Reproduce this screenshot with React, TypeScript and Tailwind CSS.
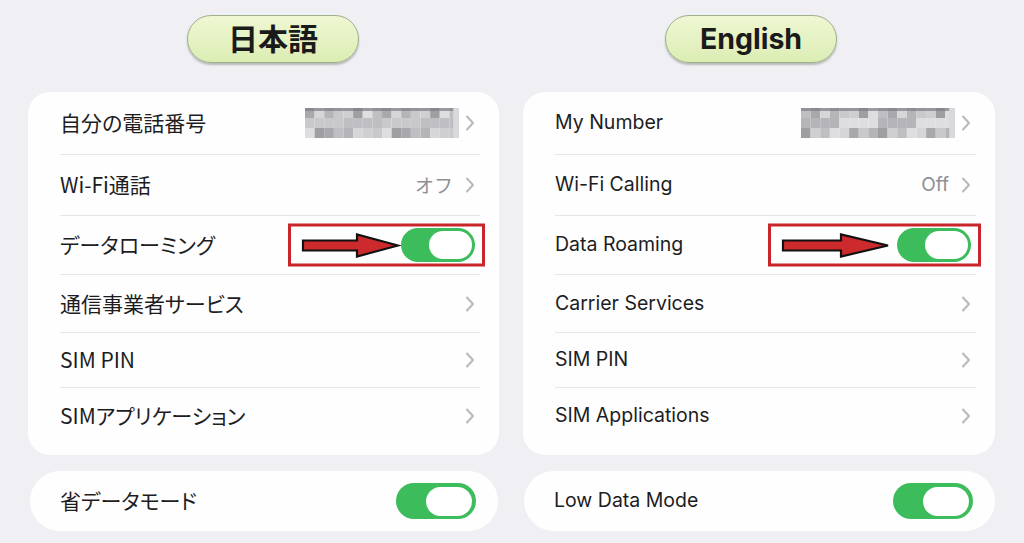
import React from "react";

const FONT = 'Inter, "Noto Sans CJK JP", "Noto Sans", sans-serif';
const JP = '"Noto Sans CJK JP", Inter, sans-serif';

function Chevron() {
  return (
    <svg width="10" height="16" viewBox="0 0 10 16" className="shrink-0">
      <path d="M2 1.5 L8 8 L2 14.5" fill="none" stroke="#b9b9be" strokeWidth="2" strokeLinecap="round" strokeLinejoin="round" />
    </svg>
  );
}

function Toggle({ big = false }: { big?: boolean }) {
  return big ? (
    <div className="w-[80px] h-[36px] rounded-full bg-[#3cbc5b] flex items-center justify-end pr-[4px] shrink-0">
      <div className="w-[46px] h-[29px] rounded-full bg-white" />
    </div>
  ) : (
    <div className="w-[74px] h-[34px] rounded-full bg-[#3cbc5b] flex items-center justify-end pr-[3px] shrink-0">
      <div className="w-[43px] h-[28px] rounded-full bg-white" />
    </div>
  );
}

function Pixelated({ seed }: { seed: number }) {
  const cols = 16;
  const rows = 3;
  const shades = ["#c9c9cc", "#b5b5b9", "#d6d6d9", "#a9a9ad", "#bfbfc3", "#dedee0", "#9e9ea3", "#cfcfd2"];
  const rects = [];
  for (let r = 0; r < rows; r++) {
    for (let c = 0; c < cols; c++) {
      const i = (c * 7 + r * 5 + seed * 3 + ((c * r) % 4)) % shades.length;
      rects.push(<rect key={`${r}-${c}`} x={c * 10} y={r * 10} width="10" height="10" fill={shades[i]} />);
    }
  }
  return (
    <svg width="154" height="30" viewBox="0 0 160 30" preserveAspectRatio="none" className="shrink-0">
      {rects}
      <rect x="0" y="0" width="160" height="3" fill="#7e7e84" opacity="0.7" />
      <rect x="154" y="0" width="6" height="30" fill="#d9d9dc" />
    </svg>
  );
}

function Arrow({ width, headStart }: { width: number; headStart: number }) {
  const h = 24;
  const c = h / 2;
  return (
    <svg width={width + 4} height={h + 4} viewBox={`-2 -2 ${width + 4} ${h + 4}`}>
      <path
        d={`M1 ${c - 5} L${headStart} ${c - 5} L${headStart} 1 L${width - 1} ${c} L${headStart} ${h - 1} L${headStart} ${c + 5} L1 ${c + 5} Z`}
        fill="#cc2a2c"
        stroke="#111"
        strokeWidth="2.2"
        strokeLinejoin="miter"
      />
    </svg>
  );
}

type Row = {
  label: string;
  h: string;
  right: React.ReactNode;
  box?: { w: string; arrowW: number; head: number; left: string };
  last?: boolean;
};

function Label({ text, jp }: { text: string; jp: boolean }) {
  return jp ? (
    <span className="text-[21px] text-[#1d1d1f]" style={{ fontFamily: JP, fontFeatureSettings: '"palt"' }}>
      {text}
    </span>
  ) : (
    <span className="text-[19.5px] text-[#1d1d1f]">{text}</span>
  );
}

function Card({ rows, jp }: { rows: Row[]; jp: boolean }) {
  return (
    <div className="bg-[#fefefe] rounded-[22px] pb-[11px]">
      {rows.map((r, i) => (
        <div
          key={i}
          className={`relative ml-[32px] mr-[19px] flex items-center justify-between ${r.h} ${r.last ? "" : "border-b border-[#e6e6ea]"}`}
        >
          <Label text={r.label} jp={jp} />
          <div className="flex items-center pr-[5px]">{r.right}</div>
          {r.box && (
            <div className={`absolute right-[-5px] top-1/2 -translate-y-1/2 h-[43px] ${r.box.w} border-[3px] border-[#c8262a] flex items-center`}>
              <div className={`${r.box.left}`}>
                <Arrow width={r.box.arrowW} headStart={r.box.head} />
              </div>
            </div>
          )}
        </div>
      ))}
    </div>
  );
}

function Pill({ children, ml, size }: { children: React.ReactNode; ml: string; size: string }) {
  return (
    <div
      className={`${ml} w-[172px] h-[48px] rounded-full bg-gradient-to-b from-[#eef7d2] to-[#dcedb4] border-[1.5px] border-[#9fb08a] shadow-[0_2px_2px_rgba(80,90,70,0.35)] flex items-center justify-center`}
    >
      <span className={`${size} font-bold text-[#1a1a1a] leading-none`}>{children}</span>
    </div>
  );
}

function BottomCard({ label, jp }: { label: string; jp: boolean }) {
  return (
    <div className="bg-[#fefefe] rounded-[30px] h-[60px] flex items-center justify-between pl-[30px] pr-[22px]">
      <Label text={label} jp={jp} />
      <Toggle big />
    </div>
  );
}

export default function App() {
  const jp: Row[] = [
    { label: "自分の電話番号", h: "h-[63px]", right: (<><Pixelated seed={1} /><span className="w-[6px]" /><Chevron /></>) },
    { label: "Wi-Fi通話", h: "h-[61px]", right: (<><span className="text-[19px] text-[#8e8e93]" style={{ fontFamily: JP }}>オフ</span><span className="w-[12px]" /><Chevron /></>) },
    {
      label: "データローミング",
      h: "h-[59px]",
      right: <Toggle />,
      box: { w: "w-[197px]", arrowW: 97, head: 55, left: "ml-[9px]" },
    },
    { label: "通信事業者サービス", h: "h-[58px]", right: <Chevron /> },
    { label: "SIM PIN", h: "h-[55px]", right: <Chevron /> },
    { label: "SIMアプリケーション", h: "h-[56px]", right: <Chevron />, last: true },
  ];
  const en: Row[] = [
    { label: "My Number", h: "h-[63px]", right: (<><Pixelated seed={4} /><span className="w-[6px]" /><Chevron /></>) },
    { label: "Wi-Fi Calling", h: "h-[61px]", right: (<><span className="text-[19px] text-[#8e8e93]">Off</span><span className="w-[12px]" /><Chevron /></>) },
    {
      label: "Data Roaming",
      h: "h-[59px]",
      right: <Toggle />,
      box: { w: "w-[213px]", arrowW: 107, head: 59, left: "ml-[9px]" },
    },
    { label: "Carrier Services", h: "h-[58px]", right: <Chevron /> },
    { label: "SIM PIN", h: "h-[55px]", right: <Chevron /> },
    { label: "SIM Applications", h: "h-[56px]", right: <Chevron />, last: true },
  ];
  return (
    <div className="w-[1024px] h-[543px] bg-[#efeff4] overflow-hidden flex gap-[24px] pl-[28px] pr-[29px]" style={{ fontFamily: FONT }}>
      <div className="w-[471px] flex flex-col">
        <div className="pt-[15px] h-[92px]">
          <Pill ml="ml-[159px]" size="text-[30px]">日本語</Pill>
        </div>
        <Card rows={jp} jp />
        <div className="mt-[16px] ml-[2px] mr-[1px]">
          <BottomCard label="省データモード" jp />
        </div>
      </div>
      <div className="w-[472px] flex flex-col">
        <div className="pt-[15px] h-[92px]">
          <Pill ml="ml-[142px]" size="text-[28.5px]">English</Pill>
        </div>
        <Card rows={en} jp={false} />
        <div className="mt-[16px] ml-[1px]">
          <BottomCard label="Low Data Mode" jp={false} />
        </div>
      </div>
    </div>
  );
}
